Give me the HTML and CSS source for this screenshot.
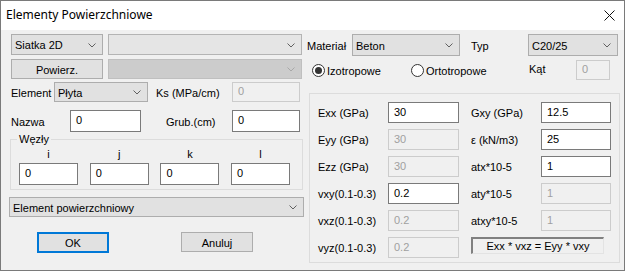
FILE: index.html
```html
<!DOCTYPE html>
<html lang="pl">

<head>
    <meta charset="UTF-8">
    <title>Elementy Powierzchniowe</title>
    <link rel="stylesheet" href="styles.css">
</head>

<body>

    <div class="window">
        <!-- Title bar -->
        <div class="titlebar">
            <span class="title">Elementy Powierzchniowe</span>
            <svg class="close" width="11" height="11" viewBox="0 0 11 11">
                <path d="M0.5 0.5 L10.5 10.5 M10.5 0.5 L0.5 10.5" stroke="#111" stroke-width="1" fill="none" />
            </svg>
        </div>

        <div class="client">
            <!-- Left column -->
            <div class="col-left">
                <div class="row r1">
                    <div class="combo w92">Siatka 2D<svg class="chev" width="8" height="5" viewBox="0 0 8 5"><path d="M0.5 0.5 L4 4 L7.5 0.5" /></svg></div>
                    <div class="combo w194 light"><span></span><svg class="chev" width="8" height="5" viewBox="0 0 8 5"><path d="M0.5 0.5 L4 4 L7.5 0.5" /></svg></div>
                </div>

                <div class="row r2">
                    <div class="button w92">Powierz.</div>
                    <div class="combo w194 disabled"><span></span><svg class="chev" width="8" height="5" viewBox="0 0 8 5"><path d="M0.5 0.5 L4 4 L7.5 0.5" /></svg></div>
                </div>

                <div class="row r3">
                    <span class="lbl lbl-element">Element</span>
                    <div class="combo w94">Płyta<svg class="chev" width="8" height="5" viewBox="0 0 8 5"><path d="M0.5 0.5 L4 4 L7.5 0.5" /></svg></div>
                    <span class="lbl lbl-ks">Ks (MPa/cm)</span>
                    <div class="edit w68 off">0</div>
                </div>

                <div class="row r4">
                    <span class="lbl lbl-nazwa">Nazwa</span>
                    <div class="edit w71 tall">0</div>
                    <span class="lbl lbl-grub">Grub.(cm)</span>
                    <div class="edit w68 tall">0</div>
                </div>

                <fieldset class="nodes">
                    <legend>Węzły</legend>
                    <div class="node-grid">
                        <span class="letter">i</span>
                        <span class="letter">j</span>
                        <span class="letter">k</span>
                        <span class="letter">l</span>
                        <div class="edit tall">0</div>
                        <div class="edit tall">0</div>
                        <div class="edit tall">0</div>
                        <div class="edit tall">0</div>
                    </div>
                </fieldset>

                <div class="combo w295 r-type">Element powierzchniowy<svg class="chev" width="8" height="5" viewBox="0 0 8 5"><path d="M0.5 0.5 L4 4 L7.5 0.5" /></svg></div>

                <div class="row buttons">
                    <div class="button w72 default">OK</div>
                    <div class="button w72 cancel">Anuluj</div>
                </div>
            </div>

            <!-- Right column -->
            <div class="col-right">
                <div class="row r1 tall-row">
                    <span class="lbl lbl-mat">Materiał</span>
                    <div class="combo w108 tall">Beton<svg class="chev" width="8" height="5" viewBox="0 0 8 5"><path d="M0.5 0.5 L4 4 L7.5 0.5" /></svg></div>
                    <span class="lbl lbl-typ">Typ</span>
                    <div class="combo w90 tall">C20/25<svg class="chev" width="8" height="5" viewBox="0 0 8 5"><path d="M0.5 0.5 L4 4 L7.5 0.5" /></svg></div>
                </div>

                <div class="row r2 radios">
                    <label class="radio radio-iso"><span class="dot checked"></span>Izotropowe</label>
                    <label class="radio radio-orto"><span class="dot"></span>Ortotropowe</label>
                    <span class="lbl lbl-kat">Kąt</span>
                    <div class="edit w34 off">0</div>
                </div>

                <div class="props">
                    <span class="lbl">Exx (GPa)</span>
                    <div class="edit">30</div>
                    <span class="lbl lbl2">Gxy (GPa)</span>
                    <div class="edit">12.5</div>

                    <span class="lbl">Eyy (GPa)</span>
                    <div class="edit off">30</div>
                    <span class="lbl lbl2">ε (kN/m3)</span>
                    <div class="edit">25</div>

                    <span class="lbl">Ezz (GPa)</span>
                    <div class="edit off">30</div>
                    <span class="lbl lbl2">atx*10-5</span>
                    <div class="edit">1</div>

                    <span class="lbl">vxy(0.1-0.3)</span>
                    <div class="edit">0.2</div>
                    <span class="lbl lbl2">aty*10-5</span>
                    <div class="edit off">1</div>

                    <span class="lbl">vxz(0.1-0.3)</span>
                    <div class="edit off">0.2</div>
                    <span class="lbl lbl2">atxy*10-5</span>
                    <div class="edit off">1</div>

                    <span class="lbl">vyz(0.1-0.3)</span>
                    <div class="edit off">0.2</div>
                    <div class="formula">Exx * vxz = Eyy * vxy</div>
                </div>
            </div>
        </div>
    </div>

</body>

</html>
```

FILE: styles.css
```css
/* Reset */
* {
    margin: 0;
    padding: 0;
    box-sizing: border-box;
}

body {
    font-family: 'Liberation Sans', Arial, sans-serif;
    font-size: 11px;
    color: #000;
    background: #fff;
}

/* Window frame */
.window {
    width: 625px;
    height: 271px;
    border: 1px solid #7a7a7a;
    background: #f0f0f0;
    display: flex;
    flex-direction: column;
}

.titlebar {
    height: 29px;
    background: #fff;
    display: flex;
    align-items: center;
    justify-content: space-between;
    padding: 0 9px 1px 5px;
}

.title {
    font-family: 'Noto Sans', sans-serif;
    font-size: 12px;
    line-height: 16px;
}

.close {
    display: block;
    margin-top: 1px;
}

.client {
    display: flex;
    flex: 1;
}

/* Columns */
.col-left {
    width: 297px;
    margin-left: 8px;
    padding-top: 4px;
    display: flex;
    flex-direction: column;
}

.col-right {
    flex: 1;
    padding-top: 4px;
    display: flex;
    flex-direction: column;
}

.row {
    display: flex;
    align-items: center;
}

.col-left .r1 {
    height: 21px;
    margin-left: 2px;
    gap: 5px;
}

.col-left .r2 {
    height: 20px;
    margin-top: 4px;
    margin-left: 2px;
    gap: 5px;
}

.col-left .r3 {
    height: 20px;
    margin-top: 3px;
    margin-left: 2px;
}

.col-left .r4 {
    height: 22px;
    margin-top: 8px;
    margin-left: 2px;
}

.lbl {
    white-space: nowrap;
    line-height: 13px;
    padding-top: 2px;
}

.lbl-element { width: 43px; }
.lbl-ks { width: 76px; margin-left: 8px; }
.lbl-nazwa { width: 59px; }
.lbl-grub { width: 66px; margin-left: 25px; }

/* Combo boxes */
.combo {
    height: 100%;
    background: #e1e1e1;
    border: 1px solid #adadad;
    display: flex;
    align-items: center;
    justify-content: space-between;
    padding: 1px 6px 0 3px;
    white-space: nowrap;
}

.combo.light {
    background: #e5e5e5;
    border-color: #b4b4b4;
}

.combo.disabled {
    background: #cccccc;
    border-color: #bfbfbf;
}

.chev path {
    fill: none;
    stroke: #606060;
    stroke-width: 1;
}

.disabled .chev path {
    stroke: #a8a8a8;
}

.w92 { width: 92px; }
.w194 { width: 194px; }
.w94 { width: 94px; }
.w68 { width: 68px; }
.w71 { width: 71px; }
.w72 { width: 72px; }
.w108 { width: 108px; }
.w90 { width: 90px; }
.w34 { width: 34px; }
.w295 { width: 295px; }

/* Buttons */
.button {
    height: 100%;
    background: #e1e1e1;
    border: 1px solid #adadad;
    display: flex;
    align-items: center;
    justify-content: center;
    padding-top: 1px;
}

.button.default {
    border: 2px solid #0078d7;
}

/* Edit fields */
.edit {
    height: 100%;
    background: #fff;
    border: 1px solid #7a7a7a;
    display: flex;
    align-items: center;
    padding-left: 5px;
    padding-bottom: 2px;
}

.edit.off {
    background: #f0f0f0;
    border-color: #cccccc;
    color: #a0a0a0;
}

/* Nodes group */
.nodes {
    margin-top: 1px;
    margin-left: 1px;
    width: 293px;
    border: 1px solid #dcdcdc;
    padding: 0 0 4px 6px;
}

.nodes legend {
    padding: 0 2px;
    line-height: 13px;
}

.node-grid {
    display: grid;
    grid-template-columns: repeat(4, 59px);
    grid-template-rows: 14px 22px;
    column-gap: 11.7px;
    row-gap: 3px;
    margin-left: 2px;
}

.letter {
    text-align: center;
    line-height: 14px;
    padding-top: 1px;
}

.r-type {
    height: 20px;
    margin-top: 7px;
}

.buttons {
    height: 21px;
    margin-top: 15px;
}

.button.default {
    margin-left: 28px;
}

.button.cancel {
    margin-left: 72px;
    height: 20px;
    align-self: flex-start;
}

/* Right column rows */
.col-right .r1 {
    height: 22px;
}

.lbl-mat { width: 46px; padding-left: 1px; }
.lbl-typ { width: 57px; margin-left: 11px; }

.col-right .r2 {
    height: 20px;
    margin-top: 4px;
}

.radio {
    display: flex;
    align-items: center;
    gap: 2px;
    white-space: nowrap;
    padding-top: 1px;
}

.radio-iso {
    margin-left: 6px;
    width: 99px;
}

.radio-orto {
    width: 118px;
}

.dot {
    width: 13px;
    height: 13px;
    border: 1px solid #333;
    border-radius: 50%;
    display: flex;
    align-items: center;
    justify-content: center;
    background: #fff;
}

.dot.checked::after {
    content: '';
    width: 7px;
    height: 7px;
    border-radius: 50%;
    background: #333;
}

.lbl-kat {
    width: 47px;
    margin-top: -3px;
}

/* Material properties box */
.props {
    margin-top: 13px;
    margin-left: 3px;
    width: 311px;
    height: 170px;
    border: 1px solid #dcdcdc;
    padding: 8px 0 0 8px;
    display: grid;
    grid-template-columns: 70px 71px 82px 70px;
    grid-template-rows: repeat(6, 21px);
    row-gap: 6px;
    align-items: center;
}

.props .edit {
    height: 21px;
}

.props .lbl2 {
    padding-left: 12px;
}

.formula {
    grid-column: 3 / 5;
    align-self: start;
    margin-left: 12px;
    width: 133px;
    height: 17px;
    border-top: 2px solid #808080;
    border-left: 2px solid #808080;
    border-right: 1px solid #e3e3e3;
    border-bottom: 1px solid #e3e3e3;
    display: flex;
    align-items: center;
    justify-content: center;
    white-space: nowrap;
    line-height: 13px;
}
```
